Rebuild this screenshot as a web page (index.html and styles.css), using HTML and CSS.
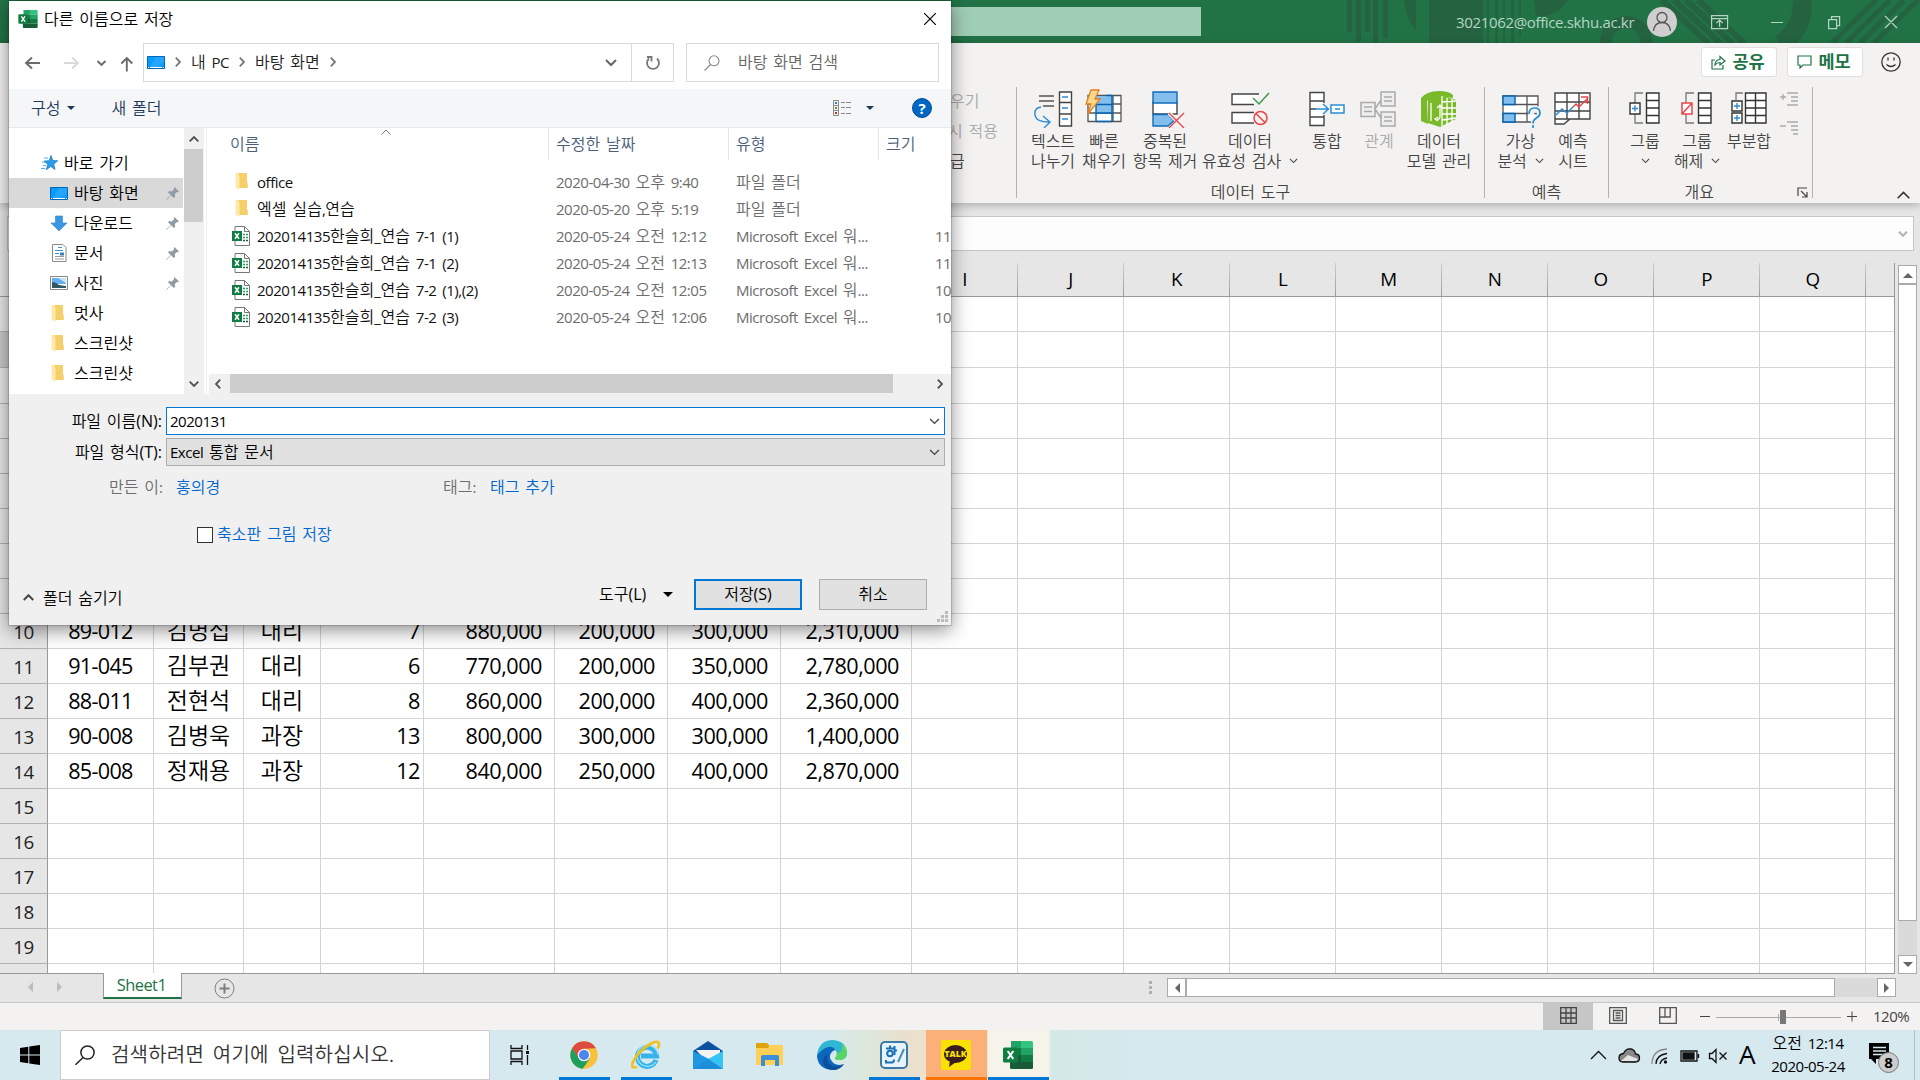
FILE: index.html
```html
<!DOCTYPE html>
<html lang="ko">
<head>
<meta charset="utf-8">
<title>다른 이름으로 저장</title>
<link rel="stylesheet" href="styles.css">
</head>
<body>
<svg class="defs" aria-hidden="true">
  <symbol id="i-excel" viewBox="0 0 30 28">
    <path fill="#21a366" d="M8 0h11v7H8z"/><path fill="#33c481" d="M18 0h10.500q1.500 0 1.500 1.500V7H18z"/>
    <path fill="#107c41" d="M7 7h12v7H7z"/><path fill="#21a366" d="M18 7h12v7H18z"/>
    <path fill="#185c37" d="M7 14h12v7H7z"/><path fill="#107c41" d="M18 14h12v7H18z"/>
    <path fill="#185c37" d="M7 21h23v5.500q0 1.500-1.500 1.500H8.500Q7 28 7 26.500z"/>
    <rect y="6.500" width="15" height="15" rx="1.500" fill="#107c41"/>
    <path stroke="#fff" stroke-width="2.100" d="M4.700 10l5.600 8M10.300 10l-5.600 8"/>
  </symbol>
  <symbol id="i-xfile" viewBox="0 0 18 20">
    <path fill="#fff" stroke="#777" d="M3 .5h9.500l5 5v14H3z"/><path fill="none" stroke="#777" d="M12.500.5v5h5"/>
    <path stroke="#21a366" stroke-width="1.600" stroke-dasharray="2 1" d="M11 8.500h5M11 11.500h5"/><path stroke="#185c37" stroke-width="1.600" stroke-dasharray="2 1" d="M11 14.500h5"/>
    <rect y="5" width="10" height="10" fill="#107c41"/><path stroke="#fff" stroke-width="1.500" d="M3 7.300l4 5.400M7 7.300l-4 5.400"/>
  </symbol>
  <symbol id="i-folder" viewBox="0 0 13 17">
    <path fill="#ffe49a" d="M1 0h5v14.500H1z"/><path fill="#f5cf69" d="M4 0h8v10h.8v5H4z"/><path fill="#ffe9a9" d="M.5.5L4.500 3v14L.5 14.500z"/>
  </symbol>
  <symbol id="i-desktop" viewBox="0 0 18 13">
    <path fill="#0a9bff" stroke="#0067b5" d="M.5.5h17v12H.5z"/><path fill="#35aeff" d="M9 1h8v5L11 11H3z" opacity=".6"/><path stroke="#fff" stroke-dasharray="1 1 12 1" d="M1 11.500h16"/>
  </symbol>
  <symbol id="i-pin" viewBox="0 0 13 13"><path fill="#8f9ba5" d="M8.500 0L13 4.500l-1.200.7-.8-.3-2.200 2.200.4 2.600-1.400 1.200L5 8.200.8 12.800.3 12.300 4.800 8 2 5.200 3.300 4l2.600.4 2.300-2.300-.3-.9z"/></symbol>
  <symbol id="i-down" viewBox="0 0 10 6"><path fill="none" stroke="currentColor" stroke-width="1.200" d="M1 .7l4 4 4-4"/></symbol>
  <symbol id="i-up" viewBox="0 0 10 6"><path fill="none" stroke="currentColor" stroke-width="1.800" d="M.7 5.300L5 1l4.300 4.300"/></symbol>
  <symbol id="i-right" viewBox="0 0 6 10"><path fill="none" stroke="currentColor" stroke-width="1.800" d="M.8.7L5 5 .8 9.300"/></symbol>
</svg>

<header class="titlebar">
  <svg class="pattern" width="600" height="43" viewBox="1320 0 600 43">
    <g fill="#246240"><path d="M1347 0h5v32h-5zM1356 0h5v41h-5zM1365 0h5v32h-5zM1373 0h5v43h-5zM1383 0h5v38h-5zM1404 0h12v31q-10-12-12-31zM1429 0h54v43h-54zM1487 0h2v43h-2zM1495 0h3v43h-3zM1503 0h2v43h-2zM1511 0h3v43h-3zM1519 0h2v36h-2z"/>
    <path d="M1534 0h34q-12 18-32 16z"/></g>
    <g fill="none" stroke="#246240"><circle cx="1626" cy="42" r="20" stroke-width="12"/><path stroke-width="6" d="M1674 0l46 43M1686 0l46 43M1698 0l46 43M1662 0l46 43"/><path stroke-width="19" d="M1802 0q2 30-22 44"/><path stroke-width="5" d="M1832 43l44-43M1846 43l44-43M1860 43l44-43M1874 43l44-43"/></g>
  </svg>
  <div class="title-search"></div>
  <span class="account t">3021062@office.skhu.ac.kr</span>
  <svg class="avatar" width="30" height="30" viewBox="0 0 30 30"><circle cx="15" cy="15" r="15" fill="#d0cecf"/><g fill="none" stroke="#555" stroke-width="1.300"><circle cx="15" cy="10.500" r="5"/><path d="M6.500 24q1-8.500 8.500-8.500t8.500 8.500"/></g></svg>
  <svg class="win-btns" width="200" height="24" viewBox="0 0 200 24" fill="none" stroke="#b5d5c3" stroke-width="1.200"><path d="M6.600 5.600h16v13h-16zM6.600 8.600h16M14.600 17v-7M11.500 13l3.100-3 3.100 3M66 12.500h12M123.600 9.600h8v9h-8zM126.600 9.600v-3h8v9h-3M180 6l12 12M192 6l-12 12"/></svg>
</header>

<section class="ribbon">
  <div class="ribbon-top">
    <button class="pill"><svg width="15" height="15" viewBox="0 0 15 15" fill="none" stroke="#217346" stroke-width="1.200"><path d="M4 5H1v9h11v-4M4 10q0-5 5-5.500V1.500L14 6l-5 4V7.500Q6 7.500 4 10z"/></svg><span class="t">공유</span></button>
    <button class="pill"><svg width="15" height="14" viewBox="0 0 15 14" fill="none" stroke="#217346" stroke-width="1.200"><path d="M1 1h13v9H6l-3 3v-3H1z"/></svg><span class="t">메모</span></button>
    <svg width="20" height="20" viewBox="0 0 20 20" fill="none" stroke="#333" stroke-width="1.300"><circle cx="10" cy="10" r="9.200"/><path d="M5.500 12.500q4.500 4 9 0M7 5.500v3M13 5.500v3"/></svg>
  </div>
  <div class="ribbon-body">
    <div class="group group-cut"><div class="cut-lines"><span class="t dim">우기</span><span class="t dim">시 적용</span><span class="t">급</span></div></div>
    <div class="group group-tools">
      <div class="buttons">
        <div class="rb w50"><svg viewBox="0 0 40 40" fill="none"><path stroke="#555" stroke-width="1.300" d="M6 8h15M6 13h15M10 18h11"/><path fill="#fff" stroke="#444" stroke-width="1.400" d="M26.500 4h12v34h-12zM26.500 14.500h12M26.500 26h12"/><path stroke="#2a8dd4" stroke-width="1.400" d="M29 9h6M29 20h6M29 31h6M8 19q-7 1-6 8t14 7M10 28l7 6-6 6"/></svg><span class="t">텍스트
나누기</span></div>
        <div class="rb w52"><svg viewBox="0 0 40 40" fill="none"><path fill="#fff" stroke="#555" stroke-width="1.300" d="M4 7.500h33v26H4zM4 16h33M4 25h33M29 7v26"/><path fill="#83beec" d="M12 8h16v17H12z"/><path stroke="#0063b1" stroke-width="1.400" d="M12 16v17.500M28 7.500v26M12 16.500h16M12 25h16M12 33.500h16M22 7.500h6"/><path fill="#f8d78f" stroke="#e8801a" stroke-width="1.300" d="M7 2h8l-4 9h5L4 26l3-10H2z"/></svg><span class="t">빠른
채우기</span></div>
        <div class="rb w70"><svg class="shift" viewBox="0 0 40 40" fill="none"><path fill="#fff" stroke="#444" stroke-width="1.400" d="M4 14h24v12H4z"/><path fill="#83beec" stroke="#0f6cbd" stroke-width="1.400" d="M4 4h24v11H4zM4 26.500h15l6 6-6 5.500H4z"/><path stroke="#f3f2f1" stroke-width="4" d="M20 25l15 15"/><path stroke="#e8464b" stroke-width="1.400" d="M20 25l15 15M35 25L20 40"/></svg><span class="t">중복된
항목 제거</span></div>
        <div class="rb w100"><svg viewBox="0 0 40 40" fill="none"><path fill="#fff" stroke="#444" stroke-width="1.400" d="M29 6H2v10.500h22M24 24.500H2V35h22"/><path stroke="#3d9950" stroke-width="1.500" d="M23 10l6 6L39 5"/><g stroke="#e8464b" stroke-width="1.500"><circle cx="30.500" cy="30" r="6.500"/><path d="M26 25.500l9 9"/></g></svg><span class="t">데이터
유효성 검사 <svg class="caret"><use href="#i-down"/></svg></span></div>
        <div class="rb w54"><svg viewBox="0 0 40 40" fill="none"><path fill="#fff" stroke="#444" stroke-width="1.400" d="M17 15V4.500H3v33h14V27M3 13h14M3 29h14M3 21h6"/><path fill="#fff" stroke="#2a8dd4" stroke-width="1.500" d="M24 17h13v8H24z"/><path stroke="#2a8dd4" stroke-width="1.400" d="M8 21h13M16 16l5.500 5-5.500 5M28 21h5"/></svg><span class="t">통합</span></div>
        <div class="rb w50 dim"><svg viewBox="0 0 40 40" fill="#eee" stroke="#aaa" stroke-width="1.500"><path d="M2 14.500h14v14H2zM22 4h14v14H22zM22 24h14v14H22zM16 21l6-9M16 21l6 9M5 19h8M5 23.500h8M25 9h8M25 13h8M25 29h8M25 33h8"/></svg><span class="t">관계</span></div>
        <div class="rb w70"><svg viewBox="0 0 40 40" fill="none"><path fill="#7ab929" d="M2 10Q8 3 20 3q10 0 14 4v3L20 8 8 13l1 23-7-3z"/><path fill="#7ab929" d="M9 12l12-5 16 5v19l-16 8-12-4z"/><path stroke="#fff" stroke-width="1.300" d="M23 8v30M23 14l14-1M23 20h14M23 26h14M23 32l14-2M28 10v27M33 11v24M12 15v18M18 31q3 1 3-3v-9M18 20l3-3 2 3M19 29l-3 2 3 2"/></svg><span class="t">데이터
모델 관리</span></div>
      </div>
      <div class="label"><span class="t">데이터 도구</span></div>
    </div>
    <div class="group group-forecast">
      <div class="buttons">
        <div class="rb w51"><svg viewBox="0 0 40 40" fill="none"><path fill="#fff" stroke="#555" stroke-width="1.300" d="M2 8h35v26H2zM26 8v26M2 16.500h35M2 25.500h35"/><path fill="#83beec" stroke="#0063b1" stroke-width="1.400" d="M2 8h12v8.500H2zM2 25.500h12V34H2z"/><path stroke="#f3f2f1" stroke-width="6" d="M30 27q0-6 5-6 4 0 4 5t-6 8v6"/><path stroke="#2a8dd4" stroke-width="1.700" d="M28 26q0-6 5.500-6t5.500 5q0 3-3.500 5T32 35.500M32 37v3"/></svg><span class="t">가상
분석 <svg class="caret"><use href="#i-down"/></svg></span></div>
        <div class="rb w54"><svg viewBox="0 0 40 40" fill="none"><path fill="#fff" stroke="#444" stroke-width="1.400" d="M2 5h35v26H17l-6 5H2zM2 31h15M2 14h35M2 23h35M14 5v26M26 5v26"/><path stroke="#2a8dd4" stroke-width="1.500" d="M3 27l6-6 5 4 6-6"/><path stroke="#e8464b" stroke-width="1.500" d="M20 19l3-3 3 3 9-9M28 9h6.500v7"/></svg><span class="t">예측
시트</span></div>
      </div>
      <div class="label"><span class="t">예측</span></div>
    </div>
    <div class="group group-outline">
      <div class="buttons">
        <div class="rb w50"><svg viewBox="0 0 40 40" fill="none"><path stroke="#777" stroke-width="1.300" d="M18 5h-8v30h8"/><path fill="#fff" stroke="#333" stroke-width="1.400" d="M21.500 5H34v30H21.500zM21.500 12.500H34M21.500 20H34M21.500 27.500H34M5 15h10v11H5z"/><path stroke="#2a8dd4" stroke-width="1.400" d="M10 17.500v6M7 20.500h6"/></svg><span class="t">그룹
<svg class="caret"><use href="#i-down"/></svg></span></div>
        <div class="rb w54"><svg viewBox="0 0 40 40" fill="none"><path stroke="#777" stroke-width="1.300" d="M17 5H9v30h8"/><path fill="#fff" stroke="#333" stroke-width="1.400" d="M21.500 5H34v30H21.500zM21.500 12.500H34M21.500 20H34M21.500 27.500H34"/><path fill="#fff" stroke="#e8464b" stroke-width="1.500" d="M5 15h10v11H5zM5 26l10-11"/></svg><span class="t">그룹
해제 <svg class="caret"><use href="#i-down"/></svg></span></div>
        <div class="rb w50"><svg viewBox="0 0 40 40" fill="none"><path stroke="#777" stroke-width="1.300" d="M14 5H7v7"/><path fill="#fff" stroke="#333" stroke-width="1.400" d="M16.500 5H37v30H16.500zM26.500 5v30M16.500 12.500H37M16.500 20H37M16.500 27.500H37M3 13h10v10H3zM3 25h10v10H3z"/><path stroke="#2a8dd4" stroke-width="1.400" d="M8 15v6M5 18h6M8 27v6M5 30h6"/></svg><span class="t">부분합</span></div>
        <svg class="mini" width="20" height="46" viewBox="0 0 20 46" fill="none" stroke="#aaa" stroke-width="1.300"><path d="M1 6h6M4 3v6M8 2h11M12 6h7M12 10h7M8 14h11M1 35h6M8 31h11M12 35h7M12 39h7M14 43h5"/></svg>
      </div>
      <div class="label"><span class="t">개요</span><svg width="11" height="11" viewBox="0 0 11 11" fill="none" stroke="#444" stroke-width="1.200"><path d="M1 9V1h9M4 4l5.500 5.500M10 5v5H5"/></svg></div>
    </div>
    <div class="collapse"><svg width="13" height="8" viewBox="0 0 10 6"><path fill="none" stroke="#333" stroke-width="1.200" d="M.5 5.500L5 1l4.500 4.500"/></svg></div>
  </div>
</section>

<section class="formula"><div class="formula-box"><svg width="10" height="6" viewBox="0 0 10 6"><path fill="none" stroke="#b5b5b5" stroke-width="2.200" d="M1 .7l4 4 4-4"/></svg></div></section>

<main class="work">
  <div class="sheet" id="sheet"></div>
  <div class="vscroll"><i class="sb"><svg width="10" height="6"><path fill="#666" d="M0 6l5-5 5 5z"/></svg></i><i class="thumb"></i><i class="track"></i><i class="sb"><svg width="10" height="6"><path fill="#666" d="M0 0l5 5 5-5z"/></svg></i></div>
</main>

<nav class="tabs">
  <svg class="arrows" width="36" height="10"><path fill="#bbb" d="M6 0v10L1 5zM30 0v10l5-5z"/></svg>
  <span class="tab t">Sheet1</span>
  <svg class="add" width="21" height="21" viewBox="0 0 21 21" fill="none" stroke="#7f7f7f"><circle cx="10.500" cy="10.500" r="9.500"/><path stroke-width="2" d="M5.500 10.500h10M10.500 5.500v10"/></svg>
  <div class="dots"><i></i><i></i><i></i></div>
  <div class="hscroll"><i class="sb"><svg width="6" height="10"><path fill="#666" d="M6 0v10L1 5z"/></svg></i><i class="thumb"></i><i class="track"></i><i class="sb"><svg width="6" height="10"><path fill="#666" d="M0 0v10l5-5z"/></svg></i></div>
</nav>

<footer class="status">
  <span class="view active"><svg width="17" height="17" viewBox="0 0 17 17" fill="none" stroke="#444" stroke-width="1.300"><path d="M.7.700h15.600v15.600H.7zM.7 6h15.600M.7 11h15.600M6 .7v15.600M11 .7v15.600"/></svg></span>
  <span class="view"><svg width="18" height="17" viewBox="0 0 18 17" fill="none" stroke="#555" stroke-width="1.300"><path d="M.7.700h16.600v15.600H.7zM4.500 3.500h9v10h-9zM6.500 6h5M6.500 8.500h5M6.500 11h5"/></svg></span>
  <span class="view"><svg width="18" height="17" viewBox="0 0 18 17" fill="none" stroke="#555" stroke-width="1.300"><path d="M.7.700h16.600v15.600H.7zM.7 10h10.500V.7M6 .7V10"/></svg></span>
  <svg class="zoom" width="160" height="16" viewBox="0 0 160 16"><path stroke="#444" d="M1 7.500h10M148 7.500h10M153 2.500v10"/><path stroke="#aaa" d="M17 8.500h125M79.500 5v7"/><path fill="#777" d="M81 1h6v14h-6z"/></svg>
  <span class="t pct">120%</span>
</footer>

<footer class="taskbar">
  <div class="start"><svg width="20" height="20" viewBox="0 0 20 20"><path d="M0 3l8.300-1.200V9.500H0zM9.300 1.600L20 0v9.500H9.300zM0 10.500h8.300v7.700L0 17zM9.300 10.500H20V20L9.300 18.400z"/></svg></div>
  <div class="search"><svg width="20" height="20" viewBox="0 0 20 20" fill="none" stroke="#222" stroke-width="1.500"><circle cx="12.500" cy="7.500" r="6.600"/><path d="M8 12.500L.5 19.800"/></svg><span class="t">검색하려면 여기에 입력하십시오.</span></div>
  <div class="taskview"><svg width="20" height="20" viewBox="0 0 20 20" fill="none" stroke="#111" stroke-width="1.300"><path d="M1 0v3.500h11V0M1 20v-3.500h11V20M1 6h11v8H1zM17.500 0v5M17.500 10v10"/><path stroke-width="3" d="M16 7.500h3"/></svg></div>
  <div class="apps">
    <div class="app run"><svg width="28" height="28" viewBox="0 0 28 28"><circle cx="14" cy="14" r="13.700" fill="#fbc13a"/><path fill="#dd4b3e" d="M2.100 7.200A13.700 13.700 0 0 1 25.900 7.200L14 7.700 8 17z"/><path fill="#1da05f" d="M2.100 7.200A13.700 13.700 0 0 0 12.600 27.700L20 17.500 8.500 17z"/><circle cx="14" cy="14" r="6.300" fill="#f5f5f5"/><circle cx="14" cy="14" r="5" fill="#4b86f0"/></svg></div>
    <div class="app run"><svg width="30" height="30" viewBox="0 0 30 30" fill="none"><path stroke="#35b3ea" stroke-width="5" d="M25 20a9.500 9.500 0 1 1 .5-4H10"/><path stroke="#a5e4fb" stroke-width="1.200" d="M25 22a10.500 10.500 0 1 1 2-7"/><path stroke="#f2c01e" stroke-width="2.600" d="M6 27q-7 2-4-5Q7 11 20 3.500q8-4 8 1 0 2-1.500 4"/></svg></div>
    <div class="app"><svg width="30" height="28" viewBox="0 0 30 28"><path fill="#0b52a0" d="M0 10L15 0l15 10v6H0z"/><path fill="#f3f3f3" d="M3 9h24v9l-12 4z"/><path fill="#1f98e4" d="M0 10l18 9L30 28H0z"/><path fill="#35c5f4" d="M30 10v18L15 18z"/><path fill="#1c8edb" d="M0 28l15-10 15 10z"/></svg></div>
    <div class="app"><svg width="28" height="24" viewBox="0 0 28 24"><path fill="#dda20c" d="M0 1q0-1 1-1h10l2 2v4H0z"/><path fill="#ffcf56" d="M0 5h12l2-3h13v20H0z"/><path fill="#3b8fd8" d="M5 14q0-2 2-2h14q2 0 2 2v9h-4v-6H9v6H5z"/></svg></div>
    <div class="app"><svg width="30" height="30" viewBox="0 0 30 30"><path fill="#0c67bd" d="M0 16Q1 5 12 4q9 0 10 7-3-2-6 0-5 4-2 9 4 7 13 4-5 6-12 6Q1 29 0 16z"/><path fill="#2fb7d5" d="M0 15Q2 0 16 0q13 1 14 13 0 7-8 7-4 0-4-2 3-3 1-7Q13 1 0 15z"/><path fill="#58d567" d="M25 3q5 4 5 11-1 6-8 6-4 0-4-2 2-2 2-5 7-1 5-10z"/><path fill="#0c4f9b" d="M11 14q-3 8 4 12 7 2 12-2-4 6-11 6-9-1-10-8 0-6 5-8z"/></svg></div>
    <div class="app run hwp"><svg width="28" height="28" viewBox="0 0 28 28"><rect x="1" y="1" width="26" height="26" rx="4" fill="#e8f4fb" stroke="#3c7aa6" stroke-width="2"/><g fill="none" stroke="#1673b8" stroke-width="2"><path d="M6 7.500h8M10 4.500v2M14.500 5v9M14.500 9.500h2.500"/><circle cx="10" cy="12.500" r="2.800"/><path d="M6 19v2.500h6q2 0 2-3"/></g><path stroke="#468fb9" stroke-width="2" d="M24 8l-6 13"/></svg></div>
    <div class="app run talk"><svg width="30" height="30" viewBox="0 0 30 30"><rect width="30" height="30" rx="2" fill="#fae100"/><ellipse cx="14.500" cy="14" rx="11.500" ry="9" fill="#3a1d1d"/><path fill="#3a1d1d" d="M9 20l-1 7 7-5z"/><text x="14.500" y="17" text-anchor="middle" class="talk-text">TALK</text></svg></div>
    <div class="app run xl"><svg width="30" height="28"><use href="#i-excel"/></svg></div>
  </div>
  <div class="tray">
    <svg width="140" height="24" viewBox="0 0 140 24" fill="none" stroke="#111" stroke-width="1.300"><path d="M1 16l7.500-7.500L16 16"/><path fill="#888" d="M33 19q-4 0-4-4t4.500-4.500Q36 5 41 6q4 1 4.500 5 4 0 4 4t-4 4z"/><path fill="#e4e4e4" stroke="none" d="M31 18l7-6 10 4-2 2z"/><g><path stroke="#888" d="M62 21Q62 7 77 6"/><path d="M66 21q0-9 11-10.500M70 21q1-5 7-6"/><circle cx="75.500" cy="19" r="1" fill="#111"/></g><path d="M91 8h16v10H91zM108.500 11v4"/><path fill="#111" d="M93 10h11v6H93z"/><path d="M119.500 10.500h2.500L126 6.500v13l-4-4h-2.500zM129.500 9.500l7 7M136.500 9.500l-7 7"/></svg>
    <span class="ime t">A</span>
    <div class="clock"><span class="t">오전 12:14</span><span class="t">2020-05-24</span></div>
    <svg class="notice" width="32" height="34" viewBox="0 0 32 34"><path d="M1 2h20v16H8v5l-5-5H1z"/><path stroke="#d6e9ef" stroke-width="1.300" d="M5 6.500h13M5 10h13M5 13.500h13"/><circle cx="20.500" cy="21.500" r="10" fill="#ccc" stroke="#777"/><text x="20.500" y="27" text-anchor="middle" class="notice-num">8</text></svg>
  </div>
</footer>

<div class="dialog">
  <div class="d-title"><svg width="20" height="18"><use href="#i-excel"/></svg><span class="t">다른 이름으로 저장</span><svg class="close" width="12" height="12"><path stroke="#000" stroke-width="1.200" d="M0 0l12 12M12 0L0 12"/></svg></div>
  <div class="d-nav">
    <svg class="navs" width="116" height="20" viewBox="0 0 116 20" fill="none" stroke="#6b6b6b" stroke-width="1.900"><path d="M16 10H2M8 4.500L2 10l6 5.500"/><path stroke="#d9d9d9" d="M40 10h14M48 4.500l6 5.500-6 5.500"/><path d="M73.500 8l4 4 4-4M102.800 18.500V5M97.300 10.500l5.500-5.500 5.500 5.500"/></svg>
    <div class="address"><svg width="18" height="13"><use href="#i-desktop"/></svg><svg class="sep" width="6" height="10"><use href="#i-right"/></svg><span class="t">내 PC</span><svg class="sep" width="6" height="10"><use href="#i-right"/></svg><span class="t">바탕 화면</span><svg class="sep" width="6" height="10"><use href="#i-right"/></svg><svg class="drop" width="12" height="8" viewBox="0 0 12 8"><path fill="none" stroke="#666" stroke-width="2" d="M1 1l5 5 5-5"/></svg>
      <div class="refresh"><svg width="16" height="16" viewBox="0 0 16 16" fill="none" stroke="#777" stroke-width="1.800"><path d="M4 3.500A6 6 0 1 0 12 3.500M2 2h4.500v4.500"/></svg></div></div>
    <div class="d-search"><svg width="16" height="16" viewBox="0 0 16 16" fill="none" stroke="#888" stroke-width="1.100"><circle cx="10" cy="5.800" r="5"/><path d="M6.500 9.500L.5 15.500"/></svg><span class="t">바탕 화면 검색</span></div>
  </div>
  <div class="d-tools"><span class="t">구성</span><i class="tri"></i><span class="t new">새 폴더</span>
    <svg class="viewmode" width="19" height="17" viewBox="0 0 19 17" fill="none"><path stroke="#888" d="M.5.500h5v5h-5zM.5 5.500h5v5h-5zM.5 10.500h5v5h-5zM8 2.500h4M13 2.500h5M8 7.500h4M13 7.500h5M8 13.500h4M13 13.500h5"/><path fill="#3c74b8" d="M2 2h2v2H2z"/><path fill="#70862b" d="M2 7h2v2H2z"/><path fill="#c03020" d="M2 12h2v2H2z"/></svg><i class="tri t2"></i><span class="help">?</span></div>
  <div class="d-main">
    <div class="tree">
      <div class="node root"><svg width="18" height="16" viewBox="0 0 18 16"><path fill="#2a9ce8" stroke="#1473bd" stroke-width=".7" d="M11 .5l1.800 5 5 .3-4 3.300 1.200 5.400-4.200-3L6.200 14.800l1.600-5.200L4 6l5.200-.2z"/><path stroke="#4fb1ee" stroke-width="1" d="M4 3h4M2 7h3M3 10.500h3M1 13.500h4"/></svg><span class="t">바로 가기</span></div>
      <div class="node sel"><svg width="18" height="13"><use href="#i-desktop"/></svg><span class="t">바탕 화면</span><svg class="pin"><use href="#i-pin"/></svg></div>
      <div class="node"><svg width="18" height="17" viewBox="0 0 18 17"><path fill="#3b97e3" stroke="#2f7fca" stroke-width=".6" d="M5.500 1h7v7h4.500L9 16 1 8h4.500z"/></svg><span class="t">다운로드</span><svg class="pin"><use href="#i-pin"/></svg></div>
      <div class="node"><svg width="18" height="18" viewBox="0 0 18 18" fill="none"><path fill="#fff" stroke="#8a8a8a" d="M2.500.5H13l3 3v14H2.500z"/><path stroke="#3b97d3" d="M8 3.500h4M5 6.500h8M5 9.500h4"/><path stroke="#999" d="M5 12.500h9M5 15h9"/><path fill="#3b82bd" d="M10 8.500h4v3h-4z"/></svg><span class="t">문서</span><svg class="pin"><use href="#i-pin"/></svg></div>
      <div class="node"><svg width="18" height="14" viewBox="0 0 18 14"><path fill="#fff" stroke="#8a8a8a" d="M.5.500h17v13H.5z"/><path fill="#67aef0" d="M2 2h14v6H2z"/><path fill="#c8e4fa" d="M8 2h8v5z"/><path fill="#2f5964" d="M2 6q4 0 7 3l7 1v2H2z"/></svg><span class="t">사진</span><svg class="pin"><use href="#i-pin"/></svg></div>
      <div class="node"><svg class="fold"><use href="#i-folder"/></svg><span class="t">멋사</span></div>
      <div class="node"><svg class="fold"><use href="#i-folder"/></svg><span class="t">스크린샷</span></div>
      <div class="node"><svg class="fold"><use href="#i-folder"/></svg><span class="t">스크린샷</span></div>
    </div>
    <div class="tree-scroll"><svg width="10" height="6"><use href="#i-up"/></svg><i></i><svg class="flip" width="10" height="6"><use href="#i-up"/></svg></div>
    <div class="list">
      <div class="l-head"><span class="t">이름</span><span class="t">수정한 날짜</span><span class="t">유형</span><span class="t">크기</span><svg class="sort" width="10" height="6" viewBox="0 0 10 6"><path fill="none" stroke="#777" d="M.5 5.500L5 1l4.500 4.500"/></svg></div>
      <div class="l-rows" id="files"></div>
      <div class="l-scroll"><svg class="lt" width="6" height="10"><use href="#i-right"/></svg><i></i><svg width="6" height="10"><use href="#i-right"/></svg></div>
    </div>
  </div>
  <div class="d-form">
    <div class="f-row"><label class="t">파일 이름(N):</label><div class="field focus"><span class="t">2020131</span><svg width="11" height="7"><use href="#i-down"/></svg></div></div>
    <div class="f-row"><label class="t">파일 형식(T):</label><div class="field combo"><span class="t">Excel 통합 문서</span><svg width="11" height="7"><use href="#i-down"/></svg></div></div>
    <div class="meta"><span class="t k1">만든 이:</span><span class="t link v1">홍의경</span><span class="t k2">태그:</span><span class="t link">태그 추가</span></div>
    <div class="thumbnail"><i class="check"></i><span class="t link">축소판 그림 저장</span></div>
    <div class="d-foot"><svg width="11" height="7"><use href="#i-up"/></svg><span class="t hide">폴더 숨기기</span><span class="t tool">도구(L)</span><i class="tri black"></i><button class="btn primary"><span class="t">저장(S)</span></button><button class="btn"><span class="t">취소</span></button></div>
    <svg class="grip" width="11" height="11"><path fill="#bbb" d="M8 0h3v3H8zM4 4h3v3H4zM8 4h3v3H8zM0 8h3v3H0zM4 8h3v3H4zM8 8h3v3H8z"/></svg>
  </div>
</div>
<script src="script.js"></script>
</body>
</html>
```
FILE: styles.css
```css
* { box-sizing: border-box; }
body {
  margin: 0; width: 1920px; height: 1080px; overflow: hidden;
  display: flex; flex-direction: column; position: relative;
  font: 350 16px/20px "Noto Sans CJK KR", "Noto Sans", sans-serif;
  color: #000; background: #e6e6e6;
}
button { font: inherit; padding: 0; margin: 0; }
svg { display: block; flex: none; }
i { display: block; }
.defs { position: absolute; width: 0; height: 0; }
.t { white-space: pre; word-spacing: 1.300px; padding-bottom: 2px; }
.lat { font-family: "Open Sans", "Noto Sans", sans-serif; font-weight: 400; font-size: .94em; letter-spacing: -.032em; line-height: 1; }

/* title bar */
.titlebar { height: 43px; flex: none; background: #217346; display: flex; align-items: center; position: relative; }
.pattern { position: absolute; right: 0; top: 0; }
.title-search { width: 801px; height: 29px; margin-left: 400px; background: #a0cdb5; }
.account { position: relative; margin-left: 255px; width: 179px; color: #b5d5c3; }
.account .lat { letter-spacing: -.36px; }
.avatar { position: relative; margin: 0 20px 0 12px; }
.win-btns { position: relative; margin-left: 8px; }

/* ribbon */
.ribbon { height: 160px; flex: none; background: #f3f2f1; color: #444; box-shadow: 0 2px 8px rgba(0,0,0,.25); position: relative; }
.ribbon-top { height: 44px; padding: 4px 19px 0 0; display: flex; justify-content: flex-end; align-items: flex-start; }
.ribbon-top > svg { margin: 5px 0 0 8px; }
.pill { height: 30px; width: 76px; margin-right: 10px; background: #fff; border: 1px solid #e1dfdd; border-radius: 3px; color: #217346; font-weight: 700; font-size: 17.500px; display: flex; align-items: center; justify-content: center; gap: 6px; padding-right: 2px; }
.ribbon-body { display: flex; height: 112px; }
.group { border-right: 1px solid #b3b3b3; height: 111px; display: flex; flex-direction: column; }
.group-cut { width: 1017px; align-items: flex-start; padding: 3px 0 0 950px; }
.cut-lines { display: flex; flex-direction: column; gap: 8px; }
.cut-lines .t:nth-child(2) { margin-left: -2px; }
.dim { color: #aaa; }
.group-tools { width: 468px; padding-left: 11px; }
.group-forecast { width: 124px; padding-left: 10px; }
.group-outline { width: 204px; padding-left: 11px; }
.buttons { display: flex; height: 94px; padding-top: 1px; flex: none; }
.rb { display: flex; flex-direction: column; align-items: center; text-align: center; }
.rb > svg { width: 40px; height: 40px; margin-bottom: 2px; }
.rb .shift { margin-left: 8px; }
.caret { display: inline-block; width: 9px; height: 6px; vertical-align: 3px; margin-left: 2px; }
.w50 { width: 50px; } .w51 { width: 51px; } .w52 { width: 52px; } .w54 { width: 54px; }
.w70 { width: 70px; } .w100 { width: 100px; }
.mini { margin: 3px 0 0 5px; }
.label { display: flex; justify-content: center; height: 16px; }
.group-tools .label { margin-left: -11px; }
.group-forecast .label { margin-left: -10px; }
.group-outline .label { justify-content: flex-end; gap: 83px; padding-right: 4px; }
.group-outline .label svg { margin-top: 6px; }
.collapse { margin: 104px 0 0 84px; }

/* formula bar */
.formula { height: 60px; flex: none; padding: 13px 6px 0 7px; }
.formula-box { height: 35px; background: #fdfdfd; border: 1px solid #c6c6c6; display: flex; justify-content: flex-end; align-items: center; padding-right: 5px; }

/* worksheet */
.work { height: 711px; flex: none; display: flex; }
.sheet {
  width: 1895px; height: 711px; overflow: hidden; display: grid; background: #fff;
  grid-template-columns: 48px 106px 90px 77px 103px 131px 113px 113px 131px repeat(9, 106px) 29px;
  grid-template-rows: 34px 35px repeat(2, 36px) repeat(16, 35px) 10px;
  border-bottom: 1px solid #999; border-right: 1px solid #999;
}
.sheet > div { border-right: 1px solid #d4d4d4; border-bottom: 1px solid #d4d4d4; display: flex; align-items: center; justify-content: center; font-size: 23px; line-height: 31px; overflow: hidden; }
.sheet .t { padding-bottom: 3px; }
.sheet > .ch { background: #e6e6e6; border-bottom-color: #999; border-right: 1px solid; border-image: linear-gradient(#d0d0d0, #999) 1; font-size: 20px; line-height: 28px; padding-bottom: 1px; }
.sheet > .rh { background: #e6e6e6; border-right-color: #999; border-bottom-color: #b0b0b0; font-size: 20px; line-height: 32px; color: #222; }
.sheet > .rh .t { padding-bottom: 1px; }
.sheet > .rh.on { background: #c8c8c8; }
.sheet > .num { justify-content: flex-end; padding-right: 12px; }
.sheet > .num.yr { padding-right: 3px; }
.sheet .num .lat { letter-spacing: -.022em; }
.vscroll { width: 19px; margin: 2px 0 0 3px; display: flex; flex-direction: column; }
.sb { width: 19px; height: 19px; background: #fff; border: 1px solid #ababab; display: flex; align-items: center; justify-content: center; flex: none; }
.vscroll .thumb { height: 637px; background: #fff; border: 1px solid #ababab; }
.vscroll .track { height: 34px; background: #dadada; }

/* sheet tabs */
.tabs { height: 29px; flex: none; display: flex; align-items: flex-start; border-bottom: 1px solid #c6c6c6; position: relative; z-index: 1; }
.arrows { margin: 8px 0 0 27px; }
.tab { width: 79px; height: 26px; margin: -1px 0 0 40px; padding-right: 2px; background: #fff; border: 1px solid #999; border-width: 0 1px; border-bottom: 2px solid #217346; color: #217346; text-align: center; font-size: 17.500px; line-height: 21px; }
.add { margin: 4px 0 0 32px; }
.dots { margin: 7px 0 0 914px; display: flex; flex-direction: column; gap: 2px; }
.dots i { width: 3px; height: 3px; background: #b0b0b0; }
.hscroll { display: flex; margin: 4px 0 0 15px; }
.hscroll .thumb { width: 649px; height: 19px; background: #fff; border: 1px solid #ababab; }
.hscroll .track { width: 42px; height: 19px; background: #dadada; }

/* status bar */
.status { height: 27px; flex: none; background: #f3f2f1; display: flex; align-items: center; padding-left: 1543px; color: #444; }
.view { width: 50px; height: 27px; display: flex; align-items: center; justify-content: center; padding-bottom: 2px; }
.view.active { background: #c6c6c6; }
.zoom { margin-left: 6px; }
.pct { margin-left: 14px; padding-bottom: 3px; }

/* taskbar */
.taskbar { height: 50px; flex: none; display: flex; background: linear-gradient(90deg, #d6e9ef 0, #d6e9ef 820px, #dbe8de 862px, #e9e0cd 905px, #f3e4cf 990px, #f3f1e6 1048px, #d3e9e5 1052px, #d6e9ef 1140px); }
.start { width: 60px; display: flex; align-items: center; justify-content: center; }
.search { width: 430px; background: #fff; border: 1px solid #ccc; display: flex; align-items: center; padding-left: 14px; gap: 16px; font-size: 20px; color: #333; }
.search .t { word-spacing: 3px; letter-spacing: .2px; }
.taskview { width: 63px; display: flex; align-items: center; padding-left: 20px; }
.apps { display: flex; }
.app { width: 62px; height: 50px; display: flex; align-items: center; justify-content: center; position: relative; padding-bottom: 1px; }
.app.run::after { content: ""; position: absolute; left: 6px; right: 5px; bottom: 0; height: 3px; background: #0078d7; }
.app.talk { background: #fbb077; margin-left: 1px; width: 61px; padding-right: 2px; }
.app.talk::after { background: #ff7300; left: 0; right: 0; }
.app.xl { background: #f5f3ea; margin-left: 1px; width: 61px; padding-right: 2px; }
.app.xl::after { left: 0; right: 0; }
.talk-text { font: 900 8.500px "Open Sans", sans-serif; fill: #fae100; }
.tray { margin-left: 541px; display: flex; align-items: center; border-right: 1px solid #a9bfc6; width: 325px; }
.tray > svg:first-child { margin-bottom: 1px; }
.ime { margin-left: 9px; width: 18px; font-size: 28px; }
.clock { width: 84px; margin-left: 9px; padding-bottom: 2px; display: flex; flex-direction: column; align-items: center; gap: 1px; }
.notice { margin: 5px 0 0 18px; }
.notice-num { font: 700 15px "Open Sans", sans-serif; }

/* save dialog */
.dialog { position: absolute; left: 9px; top: 1px; width: 942px; height: 624px; z-index: 5; background: #fff; display: flex; flex-direction: column; box-shadow: 0 0 1px 1px rgba(0,0,0,.15), 0 5px 18px rgba(0,0,0,.45); }
.d-title { height: 42px; display: flex; align-items: center; padding: 0 15px 6px 9px; gap: 6px; }
.close { margin-left: auto; }
.d-nav { height: 39px; display: flex; align-items: stretch; }
.d-nav .t { padding-bottom: 4px; }
.navs { margin: 10px 0 0 15px; }
.address { width: 531px; margin-left: 3px; border: 1px solid #d9d9d9; display: flex; align-items: center; padding-left: 3px; color: #222; }
.address .sep { color: #777; margin: 0 10px 2px; }
.drop { margin-left: auto; }
.refresh { width: 42px; align-self: stretch; margin-left: 14px; border-left: 1px solid #d9d9d9; display: flex; align-items: center; justify-content: center; }
.d-search { width: 253px; margin-left: 12px; border: 1px solid #d9d9d9; display: flex; align-items: center; padding-left: 17px; gap: 18px; color: #666; }
.d-tools { height: 39px; margin-top: 7px; background: #f5f6f8; border-bottom: 1px solid #e6e8ea; display: flex; align-items: center; padding-left: 22px; color: #1e395b; }
.tri { border: 4px solid transparent; border-top-color: #1e395b; border-bottom: 0; margin-left: 7px; }
.new { margin-left: 36px; }
.viewmode { margin-left: auto; }
.tri.t2 { margin: 0 38px 0 14px; }
.help { width: 20px; height: 20px; margin-right: 19px; border-radius: 50%; background: #0067c5; border: 1px solid #004b93; color: #fff; font: 700 15px/18px "Open Sans", sans-serif; text-align: center; }
.d-main { height: 266px; display: flex; flex: none; }
.tree { width: 175px; padding-top: 20px; }
.node { height: 30px; display: flex; align-items: center; padding: 0 5px 0 41px; gap: 6px; }
.node.root { padding-left: 31px; }
.node.sel { background: #d9d9d9; margin-right: 1px; padding-right: 4px; }
.node .t { padding-bottom: 3px; }
.pin { width: 13px; height: 13px; margin-left: auto; }
.fold { width: 13px; height: 17px; margin: 0 4px 0 1px; }
.tree-scroll { width: 20px; background: #f0f0f0; display: flex; flex-direction: column; align-items: center; padding: 8px 0 7px; color: #505050; }
.tree-scroll i { width: 19px; height: 73px; background: #cdcdcd; margin: 7px 1px auto 0; }
.flip { transform: scaleY(-1); }
.list { flex: 1; margin-left: 2px; border-left: 1px solid #eee; display: flex; flex-direction: column; overflow: hidden; position: relative; }
.l-head { height: 32px; display: grid; grid-template-columns: 342px 180px 150px 73px; color: #4c607a; position: relative; }
.l-head .t { padding: 5px 0 0 7px; border-right: 1px solid #e5e5e5; }
.l-head .t:nth-child(1) { padding-left: 23px; }
.l-head .t:nth-child(4) { border: 0; }
.sort { position: absolute; left: 174px; top: 1px; }
.l-rows { height: 214px; padding-top: 8px; }
.file { height: 27px; display: grid; grid-template-columns: 25px 25px 299px 180px 150px 48px; align-items: center; color: #6d6d6d; white-space: pre; }
.file .ico { grid-column: 2; }
.file .name { color: #111; letter-spacing: .05px; }
.file .size { padding-left: 49px; }
.file .fold { margin-left: 3px; margin-bottom: 1px; }
.l-scroll { height: 20px; margin-left: 2px; background: #f0f0f0; display: flex; align-items: center; padding: 0 8px 1px 6px; color: #505050; }
.l-scroll i { width: 663px; height: 19px; margin: 0 auto 0 9px; background: #cdcdcd; }
.lt { transform: scaleX(-1); }
.d-form { flex: 1; background: #f0f0f0; padding-top: 13px; position: relative; }
.f-row { height: 31px; display: flex; align-items: flex-start; }
.f-row label { width: 153px; text-align: right; padding-top: 3px; margin-right: 4px; }
.f-row label .lat, .btn .lat, .tool .lat { font-size: 1em; letter-spacing: 0; }
.field { width: 779px; height: 28px; border: 1px solid #adadad; background: #e1e1e1; display: flex; align-items: center; justify-content: space-between; padding: 0 4px 0 3px; }
.field svg { color: #444; }
.field.focus { background: #fff; border-color: #0078d7; }
.field.focus .t { padding-bottom: 3px; }
.meta { display: flex; height: 20px; margin: 7px 0 0 100px; color: #6d6d6d; }
.link { color: #0066cc; }
.v1 { margin-left: 14px; width: 267px; }
.k1 { width: 53px; }
.k2 { width: 47px; }
.thumbnail { display: flex; margin: 27px 0 0 188px; gap: 4px; height: 20px; }
.check { width: 16px; height: 16px; margin-top: 4px; border: 1px solid #333; background: #fff; }
.d-foot { display: flex; align-items: center; height: 31px; margin: 36px 0 0 14px; }
.d-foot > svg { color: #444; margin-top: 6px; }
.hide { margin: 7px 0 0 9px; width: 556px; }
.tool { width: 64px; padding-bottom: 3px; }
.tri.black { margin: 0 21px 0 0; border-width: 5px; border-bottom: 0; border-top-color: #000; }
.btn { width: 108px; height: 31px; margin-right: 17px; background: #e1e1e1; border: 1px solid #adadad; }
.btn.primary { border: 2px solid #0078d7; }
.btn .t { display: block; padding-bottom: 3px; }
.grip { position: absolute; right: 3px; bottom: 3px; }
```
FILE: script.js
```js
// Worksheet: the open dialog covers columns A-H of the header and rows 1-9.
var letters = ['', '', '', '', '', '', '', ''].concat('IJKLMNOPQ'.split(''));
var records = {
  10: ['89-012', '김명섭', '대리', '7', '880,000', '200,000', '300,000', '2,310,000'],
  11: ['91-045', '김부권', '대리', '6', '770,000', '200,000', '350,000', '2,780,000'],
  12: ['88-011', '전현석', '대리', '8', '860,000', '200,000', '400,000', '2,360,000'],
  13: ['90-008', '김병욱', '과장', '13', '800,000', '300,000', '300,000', '1,400,000'],
  14: ['85-008', '정재용', '과장', '12', '840,000', '250,000', '400,000', '2,870,000']
};
var sheet = document.getElementById('sheet');
function cell(text, cls) {
  var d = document.createElement('div');
  d.className = cls;
  if (text) {
    var s = document.createElement('span');
    s.className = 't';
    s.textContent = text;
    d.appendChild(s);
  }
  sheet.appendChild(d);
}
cell('', 'ch');
for (var c = 0; c < 18; c++) cell(letters[c] || '', 'ch');
for (var r = 1; r <= 20; r++) {
  cell(r > 9 && r < 20 ? String(r) : '', r === 2 ? 'rh on' : 'rh');
  for (c = 0; c < 18; c++) {
    cell((records[r] || [])[c] || '', c > 2 ? (c === 3 ? 'num yr' : 'num') : 'txt');
  }
}

// File list of the dialog.
var files = [
  ['folder', 'office', '2020-04-30 오후 9:40', '파일 폴더', ''],
  ['folder', '엑셀 실습,연습', '2020-05-20 오후 5:19', '파일 폴더', ''],
  ['xfile', '202014135한슬희_연습 7-1 (1)', '2020-05-24 오전 12:12', 'Microsoft Excel 워...', '11'],
  ['xfile', '202014135한슬희_연습 7-1 (2)', '2020-05-24 오전 12:13', 'Microsoft Excel 워...', '11'],
  ['xfile', '202014135한슬희_연습 7-2 (1),(2)', '2020-05-24 오전 12:05', 'Microsoft Excel 워...', '10'],
  ['xfile', '202014135한슬희_연습 7-2 (3)', '2020-05-24 오전 12:06', 'Microsoft Excel 워...', '10']
];
document.getElementById('files').innerHTML = files.map(function (f) {
  var icon = f[0] === 'folder'
    ? '<svg class="ico fold"><use href="#i-folder"/></svg>'
    : '<svg class="ico" width="18" height="20"><use href="#i-xfile"/></svg>';
  return '<div class="file">' + icon + '<span class="t name">' + f[1] + '</span><span class="t">' + f[2] +
    '</span><span class="t">' + f[3] + '</span><span class="t size">' + f[4] + '</span></div>';
}).join('');

// Latin runs use their own face and size next to Hangul.
document.querySelectorAll('.t').forEach(function (el) {
  Array.prototype.slice.call(el.childNodes).forEach(function (n) {
    if (n.nodeType !== 3) return;
    var frag = document.createDocumentFragment();
    n.textContent.split(/([!-~]+)/).forEach(function (part) {
      if (/^[!-~]+$/.test(part)) {
        var s = document.createElement('span');
        s.className = 'lat';
        s.textContent = part;
        frag.appendChild(s);
      } else if (part) {
        frag.appendChild(document.createTextNode(part));
      }
    });
    el.replaceChild(frag, n);
  });
});
```
